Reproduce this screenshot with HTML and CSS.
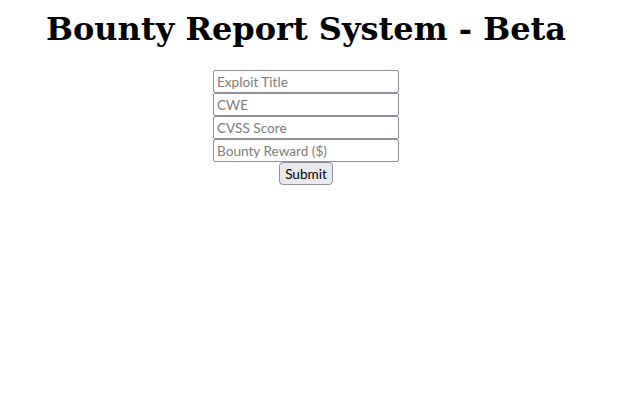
FILE: index.html
```html
<!DOCTYPE html>
<html>
<head>
<meta charset="utf-8">
<title>Bounty Report System - Beta</title>
<link rel="stylesheet" href="styles.css">
</head>
<body>
<h1 class="title">Bounty Report System - Beta</h1>
<form class="form">
<input class="field" type="text" placeholder="Exploit Title">
<input class="field" type="text" placeholder="CWE">
<input class="field" type="text" placeholder="CVSS Score">
<input class="field" type="text" placeholder="Bounty Reward ($)">
<button class="submit" type="button">Submit</button>
</form>
</body>
</html>
```
FILE: styles.css
```css
body {
  margin: 0;
  padding: 10px 8px 0 0;
  text-align: center;
  font-family: "DejaVu Serif", serif;
}
.title {
  font-family: "DejaVu Serif", serif;
  font-size: 32px;
  font-weight: bold;
  margin: 0 0 22px 0;
}
.form {
  display: flex;
  flex-direction: column;
  align-items: center;
}
.field {
  box-sizing: border-box;
  width: 186px;
  height: 23px;
  margin: 0;
  padding: 0 3px;
  border: 1px solid #8f8f9d;
  border-radius: 2px;
  background: #fff;
  font-family: Lato, "Open Sans", sans-serif;
  font-size: 13.6px;
  color: #000;
}
.field::placeholder {
  color: #7d7d7d;
}
.submit {
  box-sizing: border-box;
  height: 23px;
  margin: 0;
  padding: 0 5px;
  border: 1px solid #8f8f9d;
  border-radius: 4px;
  background: #e9e9ed;
  font-family: Lato, "Open Sans", sans-serif;
  font-size: 13.6px;
  color: #000;
}
```
